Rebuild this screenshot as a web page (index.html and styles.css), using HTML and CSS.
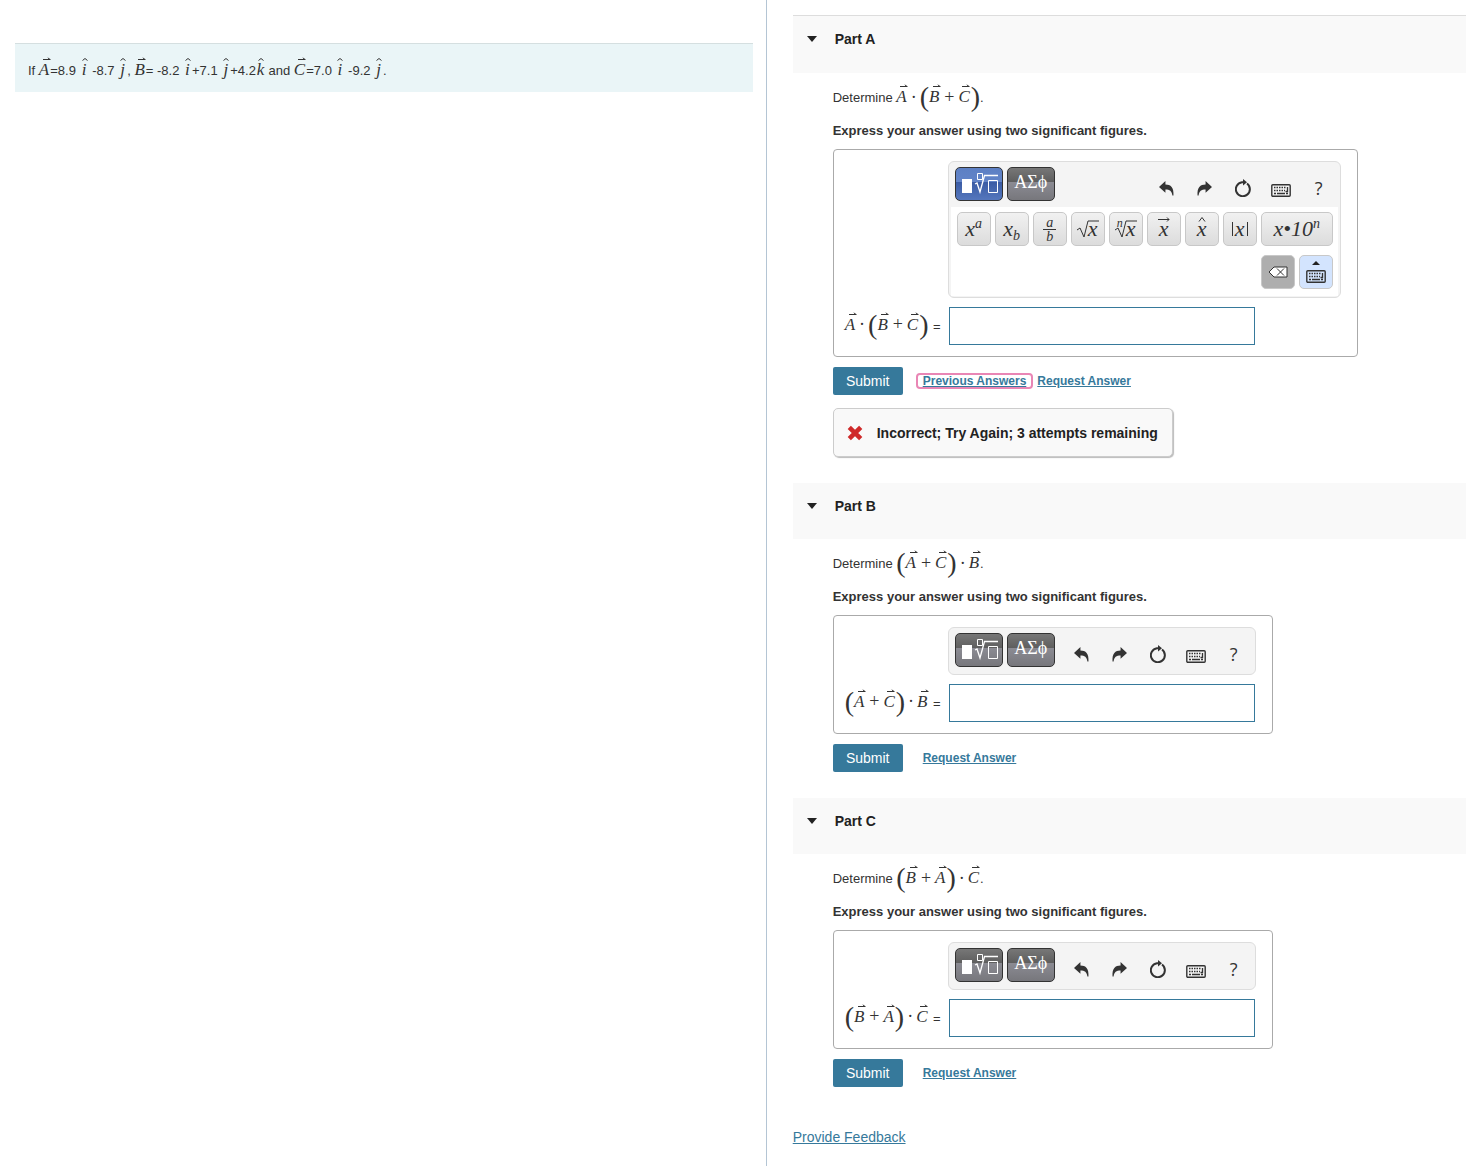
FILE: index.html
```html
<!DOCTYPE html>
<html lang="en">

<head>
    <meta charset="UTF-8">
    <meta name="viewport" content="width=device-width, initial-scale=1.0">
    <title>Vector products</title>

    <link rel="stylesheet" href="styles.css">
</head>

<body>
    <!-- shared icons -->
    <svg class="sprite" aria-hidden="true">
        <symbol id="arrow" viewBox="0 0 8 4">
            <path d="M0 2.500h7M5 .7q.5 1.500 2.500 1.800" fill="none" stroke="currentColor" />
        </symbol>
        <symbol id="hat" viewBox="0 0 6 3">
            <path d="M.5 2.500L3 .5l2.500 2" fill="none" stroke="currentColor" />
        </symbol>
        <symbol id="template" viewBox="0 0 38 24">
            <path d="M2 7h10v14H2z" fill="#fff" />
            <path d="M17.500 1.500h5v6h-5zM28.500 8.500h9v12h-9z" fill="none" stroke="#fff" />
            <path d="M15 12l2-1 3 9L24.500 3.500H38" fill="none" stroke="#fff" stroke-width="1.300" />
        </symbol>
        <symbol id="undo" viewBox="0 0 14 14">
            <path d="M0 5.500L6 0v3.300c5 0 8 2.700 7.500 10.200h-1C12 9.500 10 8 6 8v3z" fill="currentColor" />
        </symbol>
        <symbol id="redo" viewBox="0 0 14 14">
            <path d="M14 5.500L8 0v3.300c-5 0-8 2.700-7.500 10.200h1C2 9.500 4 8 8 8v3z" fill="currentColor" />
        </symbol>
        <symbol id="reset" viewBox="0 0 16 18">
            <path d="M12 4.500A7 7 0 1 1 7 3.200h2" fill="none" stroke="currentColor" stroke-width="2" />
            <path d="M8 0l4 3.200L8 6.500z" fill="currentColor" />
        </symbol>
        <symbol id="keyboard" viewBox="0 0 20 13">
            <rect x=".8" y=".8" width="18.400" height="11.400" rx="1" fill="none" stroke="currentColor" stroke-width="1.400" />
            <path d="M3 3.500h12M3 6.500h11" stroke="currentColor" stroke-width="1.500" stroke-dasharray="1.500 1" />
            <path d="M3 9.500h2M6 9.500h8M15 9.500h2M16.500 3v4.500h-2" fill="none" stroke="currentColor" stroke-width="1.300" />
        </symbol>
    </svg>

    <main class="page">
        <section class="problem">
            <p class="given">
                If <i class="vec">A<svg><use href="#arrow" /></svg></i>=8.9 <i class="unit">i<svg><use href="#hat" /></svg></i>
                -8.7 <i class="unit">j<svg><use href="#hat" /></svg></i>,
                <i class="vec">B<svg><use href="#arrow" /></svg></i>= -8.2 <i class="unit">i<svg><use href="#hat" /></svg></i>+7.1
                <i class="unit">j<svg><use href="#hat" /></svg></i>+4.2<i class="unit">k<svg><use href="#hat" /></svg></i> and
                <i class="vec">C<svg><use href="#arrow" /></svg></i>=7.0 <i class="unit">i<svg><use href="#hat" /></svg></i>
                -9.2 <i class="unit">j<svg><use href="#hat" /></svg></i>.
            </p>
        </section>

        <section class="parts">
            <article class="part">
                <h2 class="part-title first"><span class="caret"></span>Part A</h2>
                <div class="part-body">
                    <p class="question">Determine
                        <span class="math"><i class="vec">A<svg><use href="#arrow" /></svg></i><b class="dot">·</b><span class="paren">(</span><i class="vec">B<svg><use href="#arrow" /></svg></i><b>+</b><i class="vec">C<svg><use href="#arrow" /></svg></i><span class="paren">)</span></span>.
                    </p>
                    <p class="hint">Express your answer using two significant figures.</p>

                    <div class="answer">
                        <div class="toolbar">
                            <div class="tools">
                                <button class="mode active" aria-label="Templates"><svg><use href="#template" /></svg></button>
                                <button class="mode">ΑΣϕ</button>
                                <div class="actions">
                                    <button aria-label="Undo"><svg width="15" height="15"><use href="#undo" /></svg></button>
                                    <button aria-label="Redo"><svg width="15" height="15"><use href="#redo" /></svg></button>
                                    <button aria-label="Reset"><svg width="16" height="18"><use href="#reset" /></svg></button>
                                    <button aria-label="Keyboard"><svg class="kbd" width="20" height="13"><use href="#keyboard" /></svg></button>
                                    <button aria-label="Help">?</button>
                                </div>
                            </div>
                            <div class="keys">
                                <button><span>x<sup>a</sup></span></button>
                                <button><span>x<sub>b</sub></span></button>
                                <button><span class="frac"><span>a</span><span>b</span></span></button>
                                <button><span class="root">x<svg viewBox="0 0 22 18"><path d="M0 10l3-2 4 9L11 1h11" /></svg></span></button>
                                <button><span class="root">x<svg viewBox="0 0 22 18"><path d="M0 10l3-2 4 9L11 1h11" /></svg><small>n</small></span></button>
                                <button><span class="over">x<svg viewBox="0 0 12 5"><path d="M0 2.500h11M9 .5l2 2-2 2" /></svg></span></button>
                                <button><span class="over">x<svg viewBox="0 0 12 5"><path d="M3 4.500l3-4 3 4" /></svg></span></button>
                                <button><span class="abs">x</span></button>
                                <button class="wide"><span>x•10<sup>n</sup></span></button>
                                <button class="erase" aria-label="Backspace">
                                    <svg width="20" height="12" viewBox="0 0 20 12">
                                        <path d="M1 6l5-5h13v10H6z" fill="#fff" stroke="#333" />
                                        <path d="M9 2.500l7 7M16 2.500l-7 7" stroke="#333" />
                                    </svg>
                                </button>
                                <button class="toggle" aria-label="Hide keyboard">
                                    <span class="up"></span>
                                    <svg width="20" height="13"><use href="#keyboard" /></svg>
                                </button>
                            </div>
                        </div>
                        <label for="answer-a"><span class="math"><i class="vec">A<svg><use href="#arrow" /></svg></i><b class="dot">·</b><span class="paren">(</span><i class="vec">B<svg><use href="#arrow" /></svg></i><b>+</b><i class="vec">C<svg><use href="#arrow" /></svg></i><span class="paren">)</span></span> =</label>
                        <input type="text" id="answer-a">
                    </div>

                    <div class="submit-row">
                        <button class="submit">Submit</button>
                        <a href="#" class="previous">Previous Answers</a>
                        <a href="#">Request Answer</a>
                    </div>

                    <div class="feedback">
                        <svg width="16" height="16" viewBox="0 0 14 14"><path d="M2 2l10 10M12 2L2 12" stroke="#cf2a2a" stroke-width="4" /></svg>
                        Incorrect; Try Again; 3 attempts remaining
                    </div>
                </div>
            </article>

            <article class="part">
                <h2 class="part-title"><span class="caret"></span>Part B</h2>
                <div class="part-body">
                    <p class="question">Determine
                        <span class="math"><span class="paren">(</span><i class="vec">A<svg><use href="#arrow" /></svg></i><b>+</b><i class="vec">C<svg><use href="#arrow" /></svg></i><span class="paren">)</span><b class="dot">·</b><i class="vec">B<svg><use href="#arrow" /></svg></i></span>.
                    </p>
                    <p class="hint">Express your answer using two significant figures.</p>

                    <div class="answer">
                        <div class="toolbar">
                            <div class="tools">
                                <button class="mode" aria-label="Templates"><svg><use href="#template" /></svg></button>
                                <button class="mode">ΑΣϕ</button>
                                <div class="actions">
                                    <button aria-label="Undo"><svg width="15" height="15"><use href="#undo" /></svg></button>
                                    <button aria-label="Redo"><svg width="15" height="15"><use href="#redo" /></svg></button>
                                    <button aria-label="Reset"><svg width="16" height="18"><use href="#reset" /></svg></button>
                                    <button aria-label="Keyboard"><svg class="kbd" width="20" height="13"><use href="#keyboard" /></svg></button>
                                    <button aria-label="Help">?</button>
                                </div>
                            </div>
                        </div>
                        <label for="answer-b"><span class="math"><span class="paren">(</span><i class="vec">A<svg><use href="#arrow" /></svg></i><b>+</b><i class="vec">C<svg><use href="#arrow" /></svg></i><span class="paren">)</span><b class="dot">·</b><i class="vec">B<svg><use href="#arrow" /></svg></i></span> =</label>
                        <input type="text" id="answer-b">
                    </div>

                    <div class="submit-row">
                        <button class="submit">Submit</button>
                        <a href="#">Request Answer</a>
                    </div>
                </div>
            </article>

            <article class="part">
                <h2 class="part-title"><span class="caret"></span>Part C</h2>
                <div class="part-body">
                    <p class="question">Determine
                        <span class="math"><span class="paren">(</span><i class="vec">B<svg><use href="#arrow" /></svg></i><b>+</b><i class="vec">A<svg><use href="#arrow" /></svg></i><span class="paren">)</span><b class="dot">·</b><i class="vec">C<svg><use href="#arrow" /></svg></i></span>.
                    </p>
                    <p class="hint">Express your answer using two significant figures.</p>

                    <div class="answer">
                        <div class="toolbar">
                            <div class="tools">
                                <button class="mode" aria-label="Templates"><svg><use href="#template" /></svg></button>
                                <button class="mode">ΑΣϕ</button>
                                <div class="actions">
                                    <button aria-label="Undo"><svg width="15" height="15"><use href="#undo" /></svg></button>
                                    <button aria-label="Redo"><svg width="15" height="15"><use href="#redo" /></svg></button>
                                    <button aria-label="Reset"><svg width="16" height="18"><use href="#reset" /></svg></button>
                                    <button aria-label="Keyboard"><svg class="kbd" width="20" height="13"><use href="#keyboard" /></svg></button>
                                    <button aria-label="Help">?</button>
                                </div>
                            </div>
                        </div>
                        <label for="answer-c"><span class="math"><span class="paren">(</span><i class="vec">B<svg><use href="#arrow" /></svg></i><b>+</b><i class="vec">A<svg><use href="#arrow" /></svg></i><span class="paren">)</span><b class="dot">·</b><i class="vec">C<svg><use href="#arrow" /></svg></i></span> =</label>
                        <input type="text" id="answer-c">
                    </div>

                    <div class="submit-row">
                        <button class="submit">Submit</button>
                        <a href="#">Request Answer</a>
                    </div>
                </div>
            </article>

            <a href="#" class="provide">Provide Feedback</a>
        </section>
    </main>
</body>

</html>
```
FILE: styles.css
```css
* {
    margin: 0;
    padding: 0;
    box-sizing: border-box;
}

body {
    color: #333;
    font-family: "Liberation Sans", Arial, sans-serif;
    font-size: 13px;
}

button {
    border: none;
    color: inherit;
    cursor: pointer;
}

a {
    color: #36799b;
}

.sprite {
    display: none;
}

.page {
    display: flex;
    min-height: 100vh;
}

/* left side */
.problem {
    width: 52.3%;
    padding: 43px 13px 0 15px;
    border-right: 1px solid #b4c5d4;
}

.given {
    height: 49px;
    padding: 5px 13px 0;
    line-height: 44px;
    border-top: 1px solid #d5dfe0;
    background-color: #eaf5f7;
}

/* math */
.math {
    display: inline-flex;
    align-items: center;
    height: 34px;
    padding-bottom: 3px;
    vertical-align: middle;
}

.math b {
    width: 18px;
    text-align: center;
    font-family: "Liberation Serif", serif;
    font-size: 18px;
    font-weight: normal;
}

.math .dot {
    width: 12px;
}

.vec,
.unit {
    display: inline-block;
    position: relative;
    font-family: "Liberation Serif", serif;
    font-size: 17px;
    line-height: 20px;
}

.vec {
    padding-right: 1px;
}

.unit {
    width: 9px;
    text-align: center;
}

.vec svg,
.unit svg {
    position: absolute;
    top: -2px;
    left: 4px;
    width: 8px;
    height: 4px;
}

.vec svg {
    top: -3px;
}

.unit svg {
    left: 2px;
    width: 6px;
    height: 3px;
}

.paren {
    font-family: "Liberation Serif", serif;
    font-size: 28px;
    line-height: 30px;
}

/* right side */
.parts {
    flex: 1;
    padding: 15px 0 0 26px;
}

.part {
    margin-bottom: 26px;
}

.part-title {
    display: flex;
    align-items: center;
    height: 56px;
    padding: 0 14px 10px;
    color: #222;
    font-size: 14px;
    background-color: #f9f9f9;
}

.part-title.first {
    height: 58px;
    padding-bottom: 12px;
    border-top: 1px solid #ddd;
}

.caret {
    margin-right: 18px;
    border: 5px solid transparent;
    border-top: 6px solid #222;
    border-bottom: none;
}

.part-body {
    padding: 8px 40px 0;
}

.question {
    height: 34px;
    line-height: 34px;
    white-space: nowrap;
}

.hint {
    margin: 6px 0 8px;
    font-weight: bold;
    line-height: 20px;
}

.answer {
    display: grid;
    width: fit-content;
    grid-template-columns: 96px auto;
    gap: 9px 7px;
    padding: 11px 16px 11px 11px;
    border: 1px solid #aaa;
    border-radius: 4px;
}

.answer label {
    display: flex;
    align-items: center;
    justify-content: space-between;
    white-space: nowrap;
}

.answer input {
    width: 306px;
    height: 38px;
    margin-left: 1px;
    padding: 0 8px;
    border: 1px solid #36799b;
    font-size: 16px;
}

/* equation toolbar */
.toolbar {
    grid-column: 2;
    min-width: 308px;
    min-height: 48px;
    border: 1px solid #ddd;
    border-radius: 6px;
    background-color: #f4f4f4;
}

.tools {
    display: flex;
    gap: 4px;
    padding: 5px 2px 6px 6px;
}

.mode {
    width: 48px;
    height: 34px;
    padding-bottom: 3px;
    border: 1px solid #333;
    border-radius: 5px;
    color: #fff;
    font-family: "Liberation Serif", serif;
    font-size: 18px;
    background: linear-gradient(#777 0, #5e5e5e 44%, #8b8b93 44%, #77777c 100%);
}

.mode.active {
    background: linear-gradient(#5d80c4 0, #6284c8 44%, #3a5ba4 44%, #5577bd 100%);
}

.mode svg {
    display: block;
    width: 38px;
    height: 24px;
    margin: 3px auto 0;
}

.actions {
    display: flex;
    margin: 8px 0 0 auto;
}

.actions button {
    width: 38px;
    height: 26px;
    font-family: "Open Sans", sans-serif;
    font-size: 18px;
    line-height: 26px;
    background: none;
}

.actions svg {
    display: block;
    margin: 0 auto;
}

.actions .kbd {
    margin-top: 4px;
}

.keys {
    display: flex;
    flex-wrap: wrap;
    align-content: flex-start;
    justify-content: flex-end;
    gap: 9px 4px;
    width: 387px;
    height: 89px;
    margin: 0 2px 1px;
    padding: 5px 5px 0 6px;
    background-color: #fff;
}

.keys button {
    display: flex;
    flex-direction: column;
    align-items: center;
    justify-content: center;
    width: 34px;
    height: 34px;
    border: 1px solid #c8c8c8;
    border-radius: 5px;
    font-family: "Liberation Serif", serif;
    font-size: 22px;
    font-style: italic;
    line-height: 24px;
    background: linear-gradient(#f1f1f1, #dcdcdc);
}

.keys button.wide {
    width: 72px;
}

.keys button.erase {
    background: #aeaeae;
}

.keys button.toggle {
    gap: 5px;
    background: #d3e4fe;
}

.keys sup,
.keys sub {
    font-size: 14px;
    line-height: 0;
}

.keys sub {
    vertical-align: -4px;
}

.frac span {
    display: block;
    font-size: 14px;
    line-height: 13px;
    text-align: center;
    padding: 0 3px;
}

.frac span + span {
    border-top: 1px solid #333;
}

.root,
.over {
    position: relative;
}

.root {
    padding-left: 10px;
}

.keys span svg {
    position: absolute;
    top: 3px;
    left: -1px;
    width: 22px;
    height: 18px;
    fill: none;
    stroke: #333;
}

.keys .over svg {
    top: 0;
    width: 12px;
    height: 5px;
}

.root small {
    position: absolute;
    top: -6px;
    left: 1px;
    font-size: 12px;
}

.abs {
    padding: 0 2px;
    line-height: 14px;
    border: 1px solid #333;
    border-width: 0 1px;
}

.up {
    border: 4px solid transparent;
    border-top: none;
    border-bottom: 4px solid #222;
}

/* submit and feedback */
.submit-row {
    display: flex;
    align-items: center;
    margin-top: 10px;
}

.submit-row a {
    font-size: 12px;
    font-weight: bold;
    line-height: 12px;
}

.submit {
    width: 70px;
    height: 28px;
    margin-right: 20px;
    border-radius: 2px;
    color: #fff;
    font-family: inherit;
    font-size: 14px;
    background-color: #36799b;
}

.submit-row .previous {
    margin: 0 4px 0 -7px;
    padding: 0 5px;
    border: 2px solid #e986b5;
    border-radius: 4px;
}

.feedback {
    display: flex;
    align-items: center;
    gap: 14px;
    width: fit-content;
    height: 49px;
    margin-top: 13px;
    padding: 0 14px 0 13px;
    border: 1px solid #ccc;
    border-radius: 5px;
    color: #222;
    font-size: 14px;
    font-weight: bold;
    background-color: #f9f9f9;
    box-shadow: 1px 1px 1px #bbb;
}

.provide {
    display: inline-block;
    margin-top: 16px;
    font-size: 14px;
}
```
